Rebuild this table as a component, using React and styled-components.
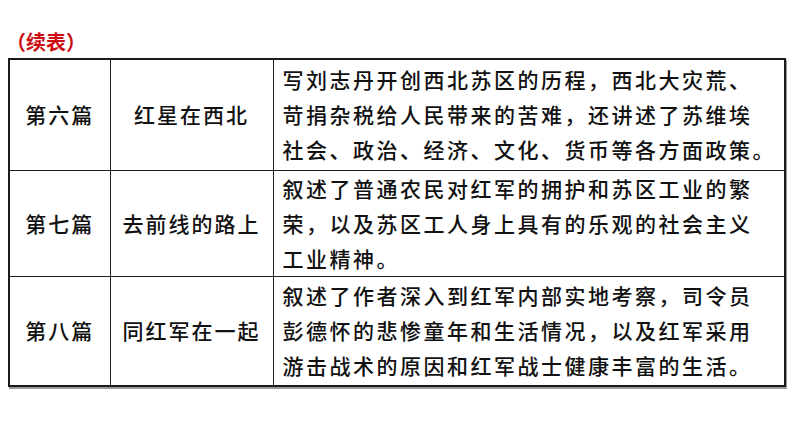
import React from 'react'
import styled, { createGlobalStyle } from 'styled-components'

const GlobalStyle = createGlobalStyle`
  html, body {
    margin: 0;
    padding: 0;
    background: #ffffff;
  }
  body {
    font-family: "Noto Sans CJK SC", "Noto Sans", sans-serif;
    color: #111111;
  }
`

const rows = [
  {
    part: '第六篇',
    title: '红星在西北',
    lines: [
      '写刘志丹开创西北苏区的历程，西北大灾荒、',
      '苛捐杂税给人民带来的苦难，还讲述了苏维埃',
      '社会、政治、经济、文化、货币等各方面政策。',
    ],
    height: 111,
  },
  {
    part: '第七篇',
    title: '去前线的路上',
    lines: [
      '叙述了普通农民对红军的拥护和苏区工业的繁',
      '荣，以及苏区工人身上具有的乐观的社会主义',
      '工业精神。',
    ],
    height: 104,
  },
  {
    part: '第八篇',
    title: '同红军在一起',
    lines: [
      '叙述了作者深入到红军内部实地考察，司令员',
      '彭德怀的悲惨童年和生活情况，以及红军采用',
      '游击战术的原因和红军战士健康丰富的生活。',
    ],
    height: 110,
  },
]

const Page = styled.div`
  width: 794px;
  height: 447px;
  padding: 28px 0 0 8px;
  box-sizing: border-box;
`

const Caption = styled.div`
  font-size: 20px;
  font-weight: 700;
  color: #cc0a12;
  line-height: 28px;
  height: 30px;
  margin-left: -2px;
`

const Table = styled.table`
  border-collapse: collapse;
  width: 776px;
  table-layout: fixed;
  border: 2px solid #1a1a1a;
  box-shadow: 1px 2px 0 #9a9a9a;
`

const Col = styled.col`
  width: ${(p) => p.$w}px;
`

const Row = styled.tr`
  height: ${(p) => p.$h}px;
`

const Cell = styled.td`
  border: 1.5px solid #1a1a1a;
  padding: ${(p) => (p.$left ? '0 0 0 9px' : '0')};
  text-align: ${(p) => (p.$left ? 'left' : 'center')};
  vertical-align: middle;
  font-size: 21px;
  font-weight: 500;
  letter-spacing: ${(p) => (p.$left ? '2.5px' : '2px')};
  line-height: 35px;
  white-space: nowrap;
  overflow: hidden;
`

const Line = styled.span`
  display: block;
`

export default function App() {
  return (
    <>
      <GlobalStyle />
      <Page>
        <Caption>（续表）</Caption>
        <Table>
          <colgroup>
            <Col $w={101} />
            <Col $w={163} />
            <Col $w={512} />
          </colgroup>
          <tbody>
            {rows.map((r) => (
              <Row key={r.part} $h={r.height}>
                <Cell>{r.part}</Cell>
                <Cell>{r.title}</Cell>
                <Cell $left>
                  {r.lines.map((l) => (
                    <Line key={l}>{l}</Line>
                  ))}
                </Cell>
              </Row>
            ))}
          </tbody>
        </Table>
      </Page>
    </>
  )
}
